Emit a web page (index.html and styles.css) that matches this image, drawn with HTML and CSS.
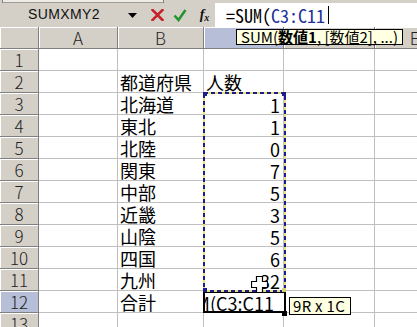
FILE: index.html
```html
<!DOCTYPE html>
<html lang="ja">
<head>
<meta charset="utf-8">
<title>Excel SUM</title>
<link rel="stylesheet" href="styles.css">
</head>
<body>
<div class="app">
  <div class="tb-edge"><span class="tb-left"></span><span class="tb-box"></span><span class="tb-rest"></span></div>
  <div class="fbar">
    <div class="namebox">SUMXMY2</div>
    <div class="dd"><svg width="9" height="5" viewBox="0 0 9 5"><path d="M0 0h9L4.5 5z" fill="#000"/></svg></div>
    <div class="btn"><svg width="13" height="12" viewBox="0 0 13 12"><path d="M1.5 1l10 10M11.5 1l-10 10" stroke="#c4232b" stroke-width="2.6" stroke-linecap="square"/></svg></div>
    <div class="btn"><svg width="14" height="13" viewBox="0 0 14 13"><path d="M1.5 6.5l4 4.5L12.5 1" fill="none" stroke="#25962f" stroke-width="2.6"/></svg></div>
    <div class="fx"><span class="f">f</span><span class="x">x</span></div>
    <div class="finput"><span class="ftext">=SUM(<span class="ref">C3:C11</span></span><span class="caret"></span></div>
  </div>
  <div class="sheet">
    <div class="grid">
      <div class="hd corner"></div><div class="hd">A</div><div class="hd">B</div><div class="hd sel">C</div><div class="hd">D</div><div class="hd">E</div>

      <div class="rh">1</div><div class="c"></div><div class="c"></div><div class="c"></div><div class="c"></div><div class="c"></div>
      <div class="rh">2</div><div class="c"></div><div class="c">都道府県</div><div class="c">人数</div><div class="c"></div><div class="c"></div>
      <div class="rh">3</div><div class="c"></div><div class="c">北海道</div><div class="c num">1</div><div class="c"></div><div class="c"></div>
      <div class="rh">4</div><div class="c"></div><div class="c">東北</div><div class="c num">1</div><div class="c"></div><div class="c"></div>
      <div class="rh">5</div><div class="c"></div><div class="c">北陸</div><div class="c num">0</div><div class="c"></div><div class="c"></div>
      <div class="rh">6</div><div class="c"></div><div class="c">関東</div><div class="c num">7</div><div class="c"></div><div class="c"></div>
      <div class="rh">7</div><div class="c"></div><div class="c">中部</div><div class="c num">5</div><div class="c"></div><div class="c"></div>
      <div class="rh">8</div><div class="c"></div><div class="c">近畿</div><div class="c num">3</div><div class="c"></div><div class="c"></div>
      <div class="rh">9</div><div class="c"></div><div class="c">山陰</div><div class="c num">5</div><div class="c"></div><div class="c"></div>
      <div class="rh">10</div><div class="c"></div><div class="c">四国</div><div class="c num">6</div><div class="c"></div><div class="c"></div>
      <div class="rh">11</div><div class="c"></div><div class="c">九州</div><div class="c num">32</div><div class="c"></div><div class="c"></div>
      <div class="rh sel">12</div><div class="c"></div><div class="c">合計</div><div class="c edit"><span class="etext">=SUM(C3:C11</span></div><div class="c"></div><div class="c"></div>
      <div class="rh">13</div><div class="c"></div><div class="c"></div><div class="c"></div><div class="c"></div><div class="c"></div>
    </div>

    <svg class="marquee" width="83" height="200" viewBox="0 0 83 200">
      <rect x="1" y="1" width="81" height="198" fill="none" stroke="#e6e27a" stroke-width="2"/>
      <rect x="1" y="1" width="81" height="198" fill="none" stroke="#1c1c8a" stroke-width="2" stroke-dasharray="4 3"/>
      <rect x="0" y="0" width="4" height="4" fill="#1c1c8a"/>
      <rect x="79" y="0" width="4" height="4" fill="#1c1c8a"/>
      <rect x="0" y="196" width="4" height="4" fill="#1c1c8a"/>
      <rect x="79" y="196" width="4" height="4" fill="#d8d070"/>
    </svg>
    <span class="fill-handle"></span>

    <svg class="cross" width="17" height="17" viewBox="0 0 17 17">
      <path d="M5.5 0.5h6v5h5v6h-5v5h-6v-5h-5v-6h5z" fill="#fff" stroke="#000" stroke-width="1.2"/>
    </svg>

    <div class="tip fn">SUM(<b>数値1</b>, [数値2], ...)</div>
    <div class="tip size">9R x 1C</div>
  </div>
</div>
</body>
</html>
```

FILE: styles.css
```css
* { box-sizing: border-box; }
html, body { margin: 0; padding: 0; }
body {
  width: 417px;
  height: 327px;
  overflow: hidden;
  background: #d4d0c8;
  font-family: "Noto Sans CJK JP", "Noto Sans", sans-serif;
}
.app { width: 417px; height: 327px; overflow: hidden; }

.tb-edge { display: flex; height: 3px; }
.tb-left { width: 3px; border-right: 1px solid #808080; }
.tb-box { width: 160px; background: #ecebe6; border-bottom: 1px solid #a09c94; }
.tb-rest { flex: 1; border-left: 1px solid #808080; }

.fbar { display: flex; height: 24px; align-items: stretch; }
.namebox {
  width: 124px;
  padding-left: 28px;
  font-family: "Liberation Sans", Arial, sans-serif;
  font-size: 14px;
  line-height: 22px;
  letter-spacing: 0.4px;
  color: #111;
}
.dd { width: 17px; display: flex; align-items: center; justify-content: center; padding-top: 1px; }
.btn { width: 19px; margin-left: 7px; display: flex; align-items: center; justify-content: center; }
.btn + .btn { margin-left: 3px; }
.fx {
  width: 19px; margin-left: 6px;
  display: flex; align-items: center; justify-content: center;
  font-family: "Liberation Serif", serif; font-style: italic; font-weight: bold;
  color: #111;
}
.fx .f { font-size: 14px; }
.fx .x { font-size: 10px; margin-top: 4px; }
.finput {
  flex: 1;
  margin-left: 1px;
  background: #fff;
  display: flex;
  align-items: center;
  padding-left: 11px;
}
.ftext {
  font-size: 18px;
  font-feature-settings: "hwid";
  line-height: 24px;
  color: #000;
}
.ref { color: #20309a; }
.caret { width: 1px; height: 18px; background: #000; margin-left: 3px; }

.sheet { position: relative; height: 300px; overflow: hidden; background: #fff; }
.grid {
  display: grid;
  grid-template-columns: 39px 79px 86px 80px 91px 80px;
  grid-auto-rows: 22px;
}
.hd, .rh {
  background: #d4d0c8;
  border-right: 1px solid #808080;
  border-bottom: 1px solid #808080;
  box-shadow: inset 1px 1px 0 #fff;
  font-size: 17px;
  line-height: 22px;
  text-align: center;
  color: #222;
  font-weight: 300;
}
.hd.sel, .rh.sel { background: #b6bed8; }
.c {
  border-right: 1px solid #c0c0c0;
  border-bottom: 1px solid #c0c0c0;
  font-size: 18px;
  line-height: 22px;
  padding: 0 2px;
  white-space: nowrap;
  overflow: hidden;
  color: #000;
}
.c.num { text-align: right; padding-right: 3px; padding-top: 1px; }
.c.edit {
  position: relative;
  border: 2px solid #000;
  margin-left: -1px;
  margin-right: -2px;
  display: flex;
  justify-content: flex-end;
  padding-right: 10px;
}
.etext { font-size: 18px; line-height: 20px; }

.marquee { position: absolute; left: 203px; top: 65px; }
.fill-handle { position: absolute; left: 282px; top: 284px; width: 5px; height: 5px; background: #000; }
.cross { position: absolute; left: 251px; top: 249px; }

.tip {
  position: absolute;
  background: #ffffe1;
  border: 1px solid #000;
  white-space: nowrap;
  color: #000;
}
.tip.fn {
  left: 236px; top: 2px;
  height: 16px;
  padding: 0 4px;
  font-size: 15px;
  line-height: 14px;
}
.tip.fn b { font-weight: bold; }
.tip.size {
  left: 289px; top: 270px;
  height: 18px;
  padding: 0 5px 0 3px;
  font-size: 15px;
  letter-spacing: 0.3px;
  line-height: 16px;
}
```
